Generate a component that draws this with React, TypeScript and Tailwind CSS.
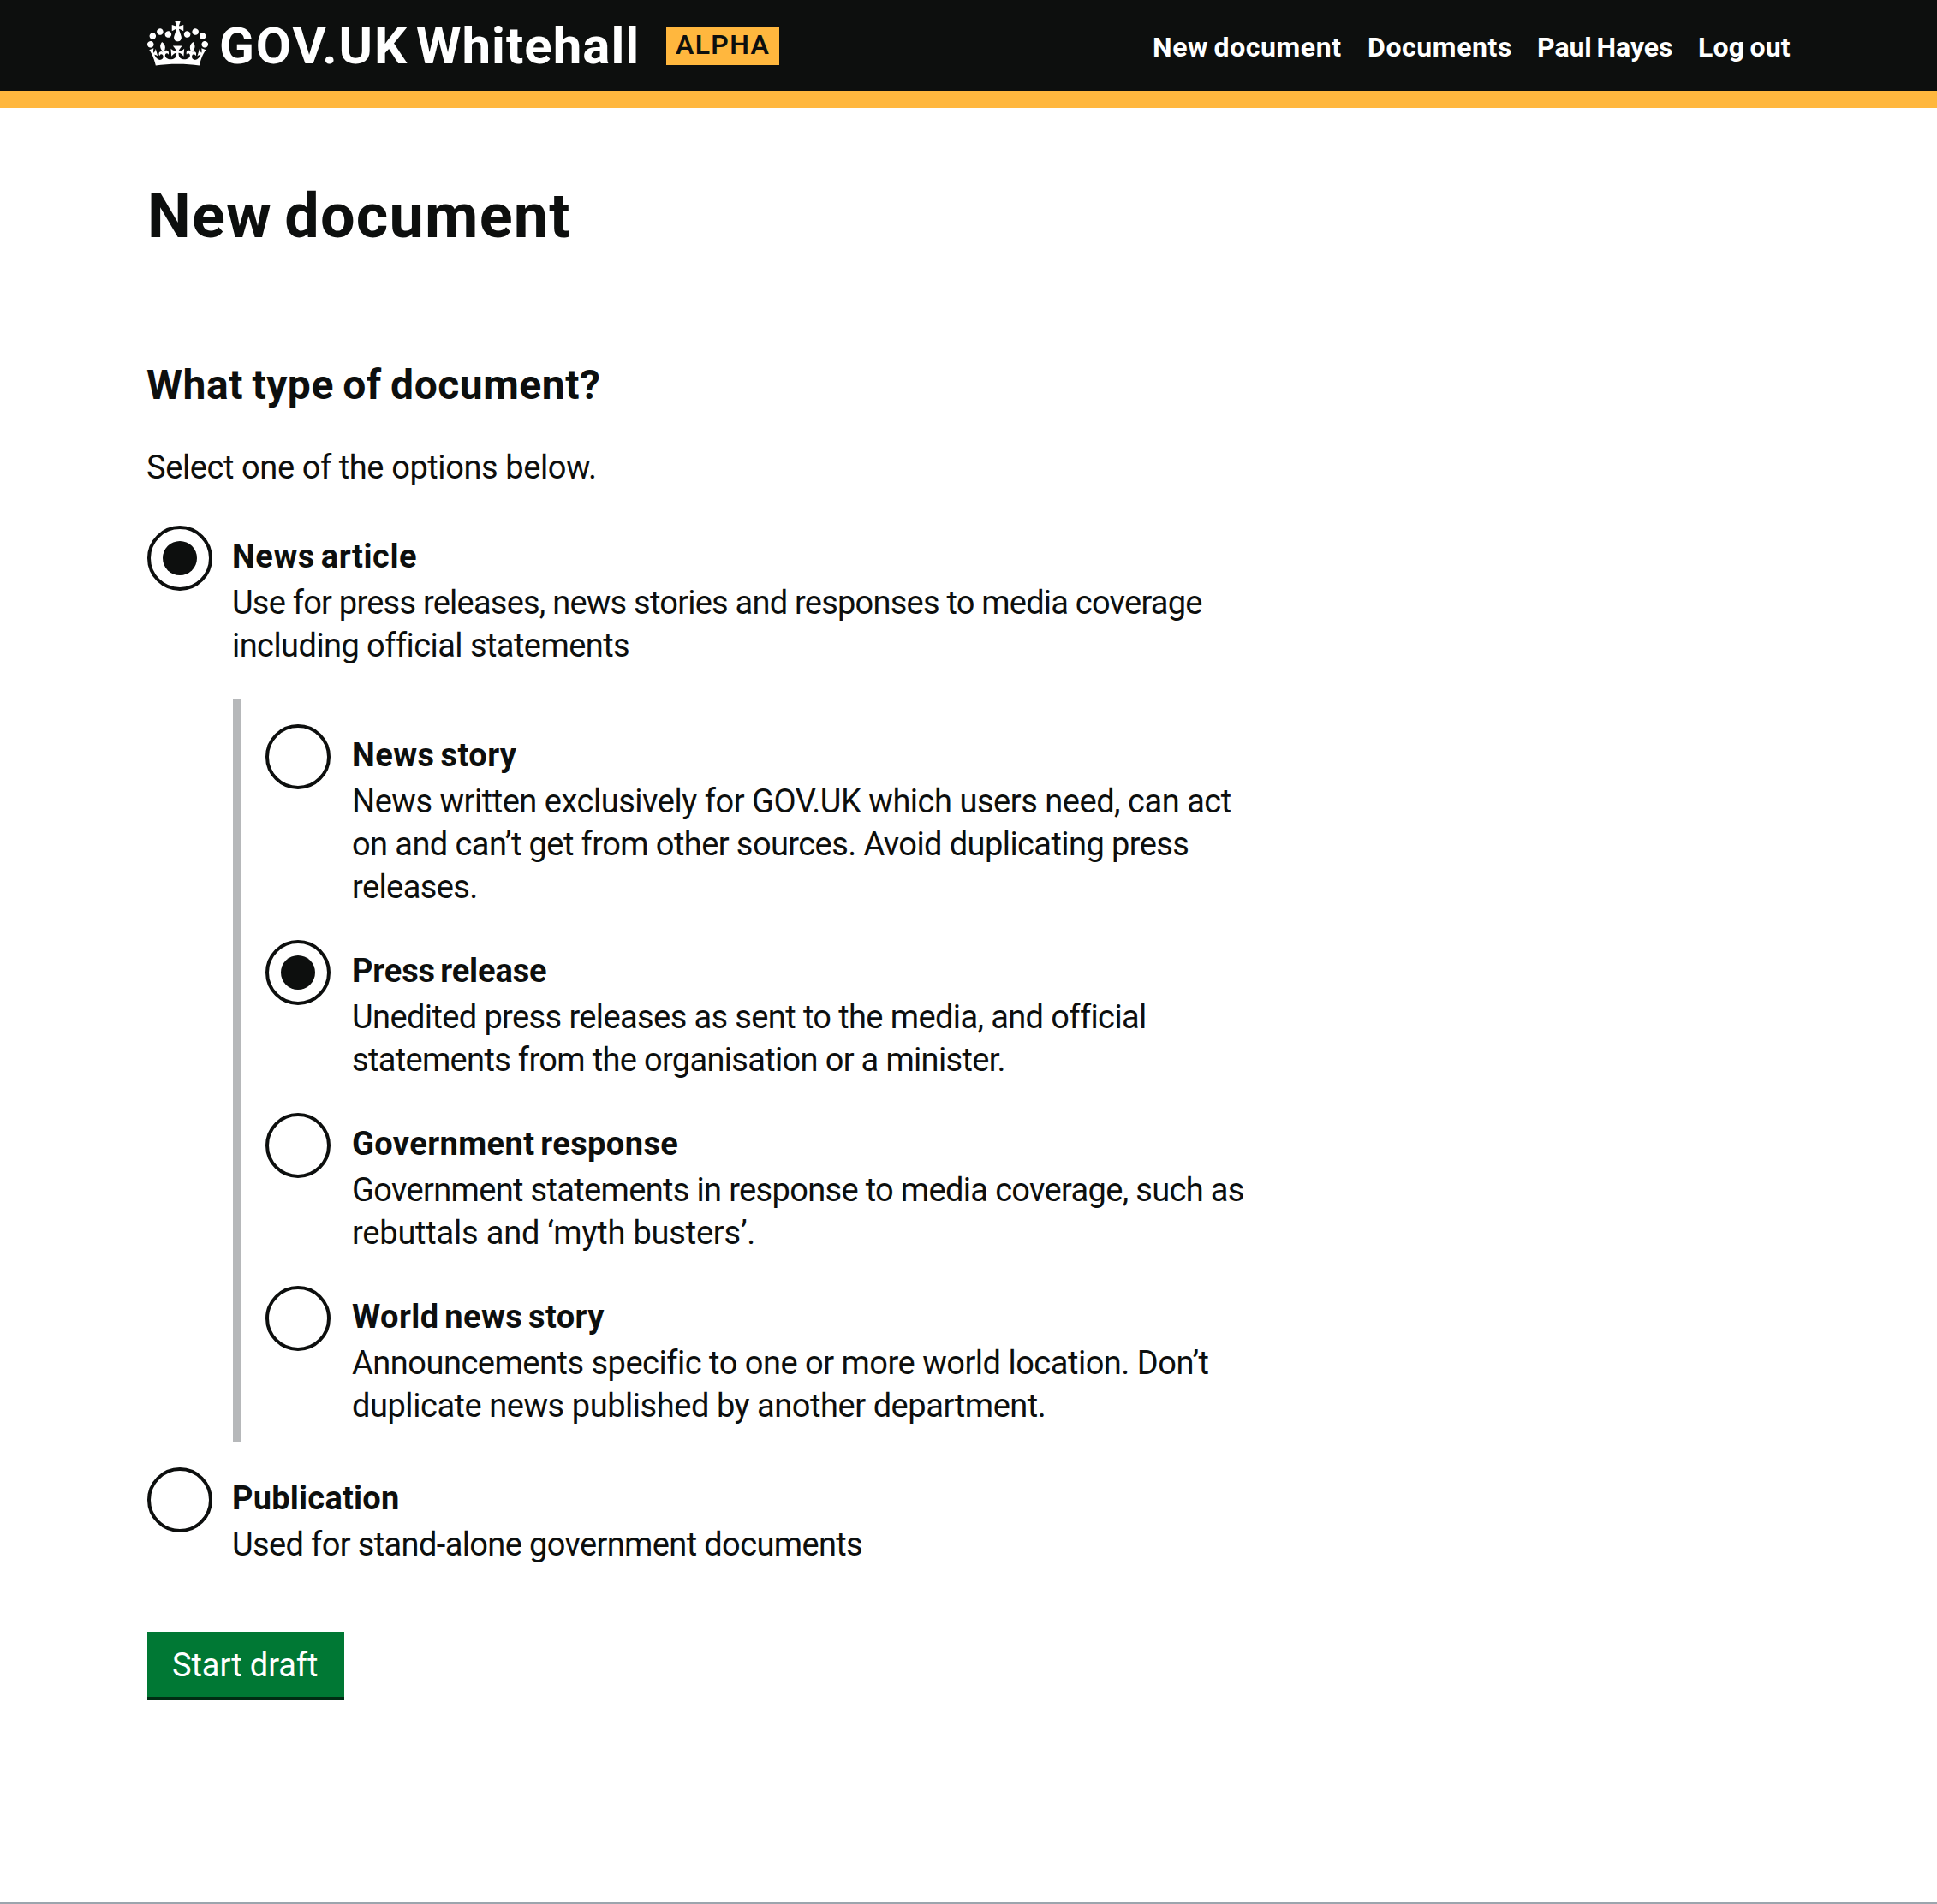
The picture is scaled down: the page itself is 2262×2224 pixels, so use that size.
import { useState } from "react";
import clsx from "clsx";

type Line = { text: string; tracking: string };
type Option = { id: string; label: Line; lines: Line[] };

const navItems: (Line & { width: string })[] = [
  { text: "New document", tracking: "tracking-[0.57px]", width: "w-[220px]" },
  { text: "Documents", tracking: "tracking-[0.6px]", width: "w-[167px]" },
  { text: "Paul Hayes", tracking: "tracking-[-0.07px]", width: "w-[157px]" },
  { text: "Log out", tracking: "tracking-[0.2px]", width: "w-[108px]" },
];

const newsArticle: Option = {
  id: "news-article",
  label: { text: "News article", tracking: "tracking-[0.53px]" },
  lines: [
    {
      text: "Use for press releases, news stories and responses to media coverage",
      tracking: "tracking-[-0.77px]",
    },
    { text: "including official statements", tracking: "tracking-[-0.56px]" },
  ],
};

const publication: Option = {
  id: "publication",
  label: { text: "Publication", tracking: "tracking-[0.22px]" },
  lines: [{ text: "Used for stand-alone government documents", tracking: "tracking-[-0.63px]" }],
};

const newsSubtypes: Option[] = [
  {
    id: "news-story",
    label: { text: "News story", tracking: "tracking-[0.45px]" },
    lines: [
      {
        text: "News written exclusively for GOV.UK which users need, can act",
        tracking: "tracking-[-0.47px]",
      },
      {
        text: "on and can’t get from other sources. Avoid duplicating press",
        tracking: "tracking-[-0.58px]",
      },
      { text: "releases.", tracking: "tracking-[-0.6px]" },
    ],
  },
  {
    id: "press-release",
    label: { text: "Press release", tracking: "tracking-[-0.13px]" },
    lines: [
      {
        text: "Unedited press releases as sent to the media, and official",
        tracking: "tracking-[-0.61px]",
      },
      { text: "statements from the organisation or a minister.", tracking: "tracking-[-0.67px]" },
    ],
  },
  {
    id: "government-response",
    label: { text: "Government response", tracking: "tracking-[0.4px]" },
    lines: [
      {
        text: "Government statements in response to media coverage, such as",
        tracking: "tracking-[-0.66px]",
      },
      { text: "rebuttals and ‘myth busters’.", tracking: "tracking-[-0.21px]" },
    ],
  },
  {
    id: "world-news-story",
    label: { text: "World news story", tracking: "tracking-[0.4px]" },
    lines: [
      {
        text: "Announcements specific to one or more world location. Don’t",
        tracking: "tracking-[-0.49px]",
      },
      { text: "duplicate news published by another department.", tracking: "tracking-[-0.45px]" },
    ],
  },
];

function Crown() {
  return (
    <svg
      className="mt-6 h-[53px] w-[71px] shrink-0"
      viewBox="0 0 132 97"
      preserveAspectRatio="none"
      fill="currentColor"
      aria-hidden="true"
    >
      <path
        fillRule="evenodd"
        d="M25 30.2c3.5 1.5 7.7-.2 9.1-3.7 1.5-3.6-.2-7.8-3.9-9.2-3.6-1.4-7.6.3-9.1 3.9-1.4 3.5.3 7.5 3.9 9zM9 39.5c3.6 1.5 7.8-.2 9.2-3.7 1.5-3.6-.2-7.8-3.9-9.1-3.6-1.5-7.6.2-9.1 3.8-1.4 3.5.3 7.5 3.8 9zM4.4 57.2c3.5 1.5 7.7-.2 9.1-3.8 1.5-3.6-.2-7.7-3.9-9.1-3.5-1.5-7.6.3-9.1 3.8-1.4 3.5.3 7.6 3.9 9.1zm38.3-21.4c3.5 1.5 7.7-.2 9.1-3.8 1.5-3.6-.2-7.7-3.9-9.1-3.6-1.5-7.6.3-9.1 3.8-1.3 3.6.4 7.7 3.9 9.1zm64.4-5.6c-3.6 1.5-7.8-.2-9.1-3.7-1.5-3.6.2-7.8 3.8-9.2 3.6-1.4 7.7.3 9.2 3.9 1.3 3.5-.4 7.5-3.9 9zm15.9 9.3c-3.6 1.5-7.7-.2-9.1-3.7-1.5-3.6.2-7.8 3.7-9.1 3.6-1.5 7.7.2 9.2 3.8 1.5 3.5-.3 7.5-3.8 9zm4.7 17.7c-3.6 1.5-7.8-.2-9.2-3.8-1.5-3.6.2-7.7 3.9-9.1 3.6-1.5 7.7.3 9.2 3.8 1.3 3.5-.4 7.6-3.9 9.1zM89.3 35.8c-3.6 1.5-7.8-.2-9.2-3.8-1.4-3.6.2-7.7 3.9-9.1 3.6-1.5 7.7.3 9.2 3.8 1.4 3.6-.3 7.7-3.9 9.1zM69.7 17.7l8.9 4.7V9.3l-8.9 2.8c-.2-.3-.5-.6-.9-.9L72.4 0H59.6l3.5 11.2c-.3.3-.6.5-.9.9l-8.8-2.8v13.1l8.8-4.7c.3.3.6.7.9.9l-5 15.4v.1c-.2.8-.4 1.6-.4 2.4 0 4.1 3.1 7.5 7 8.1h.2c.3 0 .7.1 1 .1.4 0 .7 0 1-.1h.2c4-.6 7.1-4.1 7.1-8.1 0-.8-.1-1.7-.4-2.4V34l-5.1-15.4c.4-.2.7-.6 1-.9zM66 92.8c16.9 0 32.8 1.1 47.1 3.2 4-16.9 8.9-26.7 14-33.5l-9.6-3.4c1 4.9 1.1 7.2 0 10.2-1.5-1.4-3-4.3-4.2-8.7L108.6 76c2.8-2 5-3.2 7.5-3.3-4.4 9.4-10 11.9-13.6 11.2-4.3-.8-6.3-4.6-5.6-7.9 1-4.7 5.7-5.9 8-.5 4.3-8.7-3-11.4-7.6-8.8 7.1-7.2 7.9-13.5 2.1-21.1-8 6.1-8.1 12.3-4.5 20.8-4.7-5.4-12.1-2.5-9.5 6.2 3.4-5.2 7.9-2 7.2 3.1-.6 4.3-6.4 7.8-13.5 7.2-10.3-.9-10.9-8-11.2-13.8 2.5-.5 7.1 1.8 11 7.3L80.2 60c-4.1 4.4-8 5.3-12.3 5.4 1.4-4.4 8-11.6 8-11.6H55.5s6.4 7.2 7.9 11.6c-4.2-.1-8-1-12.3-5.4l1.4 16.4c3.9-5.5 8.5-7.7 10.9-7.3-.3 5.8-.9 12.8-11.1 13.8-7.2.6-12.9-2.9-13.5-7.2-.7-5 3.8-8.3 7.1-3.1 2.7-8.7-4.6-11.6-9.4-6.2 3.7-8.5 3.6-14.7-4.6-20.8-5.8 7.6-5 13.9 2.2 21.1-4.7-2.6-11.9.1-7.7 8.8 2.3-5.5 7.1-4.2 8.1.5.7 3.3-1.3 7.1-5.7 7.9-3.5.7-9-1.8-13.5-11.2 2.5.1 4.7 1.3 7.5 3.3l-4.7-15.4c-1.2 4.4-2.7 7.2-4.3 8.7-1.1-3-.9-5.3 0-10.2l-9.5 3.4c5 6.9 9.9 16.7 14 33.5 14.8-2.1 30.8-3.2 47.7-3.2z"
      />
    </svg>
  );
}

function Header() {
  return (
    <header className="border-b-20 border-[#ffb73e] bg-[#0d0f0e] text-white">
      <div className="flex h-[106px] items-start justify-between pr-[171px] pl-[172px] font-bold whitespace-nowrap">
        <div className="flex items-start">
          <Crown />
          <a className="mt-[24px] ml-[13px] flex text-[60px] leading-[60px]" href="#">
            <span className="w-[230px] tracking-[1.92px]">GOV.UK</span>
            <span className="w-[263px] tracking-[1px]">Whitehall</span>
          </a>
          <strong className="mt-8 ml-[29px] h-11 w-[132px] bg-[#ffb73e] pl-[11px] text-[32px] leading-[41px] font-semibold tracking-[1.34px] text-[#0d0f0e]">
            ALPHA
          </strong>
        </div>
        <nav className="mt-[35px] flex gap-[31px] text-[32px] leading-10 [word-spacing:-2px]">
          {navItems.map((item) => (
            <a key={item.text} href="#" className={clsx(item.width, item.tracking)}>
              {item.text}
            </a>
          ))}
        </nav>
      </div>
    </header>
  );
}

type RadioProps = { option: Option; checked: boolean; onSelect: () => void; labelGap: string };

function RadioOption({ option, checked, onSelect, labelGap }: RadioProps) {
  return (
    <label className={clsx("flex cursor-pointer items-start", labelGap)}>
      <input type="radio" className="sr-only" checked={checked} onChange={onSelect} />
      <span className="flex size-[76px] shrink-0 items-center justify-center rounded-full border-4 border-[#0d0f0e]">
        {checked && <span className="size-10 rounded-full bg-[#0d0f0e]" />}
      </span>
      <span className="block pt-[11px] leading-[50px] whitespace-nowrap">
        <span className={clsx("block font-bold [word-spacing:-3px]", option.label.tracking)}>
          {option.label.text}
        </span>
        <span className="mt-1 -mb-px block">
          {option.lines.map((line) => (
            <span key={line.text} className={clsx("block", line.tracking)}>
              {line.text}
            </span>
          ))}
        </span>
      </span>
    </label>
  );
}

export default function App() {
  const [type, setType] = useState("news-article");
  const [subtype, setSubtype] = useState("press-release");

  return (
    <div className="h-[2224px] overflow-hidden bg-white font-['Roboto',sans-serif] text-[38px] text-[#0d0f0e]">
      <Header />
      <main className="px-[172px]">
        <h1 className="pt-[87px] text-[72px] leading-[80px] font-bold tracking-[1.2px] [word-spacing:-5px]">
          New document
        </h1>
        <h2 className="mt-[129px] -ml-px text-[48px] leading-[56px] font-bold tracking-[0.53px] [word-spacing:-2px]">
          What type of document?
        </h2>
        <p className="mt-[43px] -mb-px -ml-px leading-[50px] tracking-[-0.4px]">
          Select one of the options below.
        </p>

        <div className="mt-11">
          <RadioOption
            option={newsArticle}
            checked={type === newsArticle.id}
            onSelect={() => setType(newsArticle.id)}
            labelGap="gap-[23px]"
          />
          <div className="mt-[38px] ml-[100px] flex flex-col gap-[38px] border-l-10 border-[#b6b8ba] pt-[30px] pb-[18px] pl-7">
            {newsSubtypes.map((option) => (
              <RadioOption
                key={option.id}
                option={option}
                checked={subtype === option.id}
                onSelect={() => setSubtype(option.id)}
                labelGap="gap-[25px]"
              />
            ))}
          </div>
          <div className="mt-[30px]">
            <RadioOption
              option={publication}
              checked={type === publication.id}
              onSelect={() => setType(publication.id)}
              labelGap="gap-[23px]"
            />
          </div>
        </div>

        <button className="mt-[78px] block h-20 w-[230px] border-b-4 border-[#002c13] bg-[#007834] pt-[3px] pl-[29px] text-left tracking-[-0.08px] text-white">
          Start draft
        </button>
      </main>
      <footer className="mt-[236px] h-2 border-t-2 border-[#9ca5ad]" />
    </div>
  );
}
